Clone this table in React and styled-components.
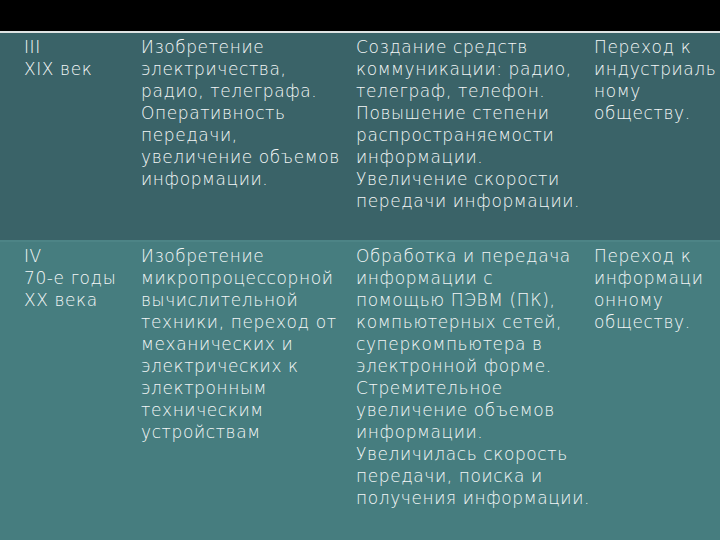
import React from "react";
import styled, { createGlobalStyle } from "styled-components";

const Global = createGlobalStyle`
  html, body {
    margin: 0;
    padding: 0;
    background: #000;
  }
  body {
    width: 720px;
    height: 540px;
    overflow: hidden;
  }
`;

const Page = styled.div`
  width: 720px;
  height: 540px;
  display: flex;
  flex-direction: column;
  background: #000;
  overflow: hidden;
`;

const TopBar = styled.div`
  height: 31px;
  flex: none;
  background: #000;
  border-bottom: 2px solid #dfe3e3;
`;

const Row = styled.div`
  display: grid;
  grid-template-columns: 117px 215px 238px 1fr;
  padding: 3px 0 0 24px;
  height: ${({ $h }) => ($h ? `${$h}px` : "auto")};
  flex: ${({ $h }) => ($h ? "none" : "1")};
  box-sizing: border-box;
  background: ${({ $bg }) => $bg};
  border-bottom: ${({ $line }) => ($line ? `2px solid ${$line}` : "none")};
`;

const Cell = styled.div`
  font-family: "DejaVu Sans", "Liberation Sans", sans-serif;
  font-weight: 200;
  font-size: 17px;
  line-height: 22px;
  color: #f4f7f7;
  white-space: pre;
  letter-spacing: 0.6px;
`;

const rows = [
  {
    bg: "#3a6368",
    h: 209,
    line: "#4d8486",
    cells: [
      "III\nXIX век",
      "Изобретение\nэлектричества,\nрадио, телеграфа.\nОперативность\nпередачи,\nувеличение объемов\nинформации.",
      "Создание средств\nкоммуникации: радио,\nтелеграф, телефон.\nПовышение степени\nраспространяемости\nинформации.\nУвеличение скорости\nпередачи информации.",
      "Переход к\nиндустриаль\nному\nобществу.",
    ],
  },
  {
    bg: "#467d7f",
    cells: [
      "IV\n70-е годы\nXX века",
      "Изобретение\nмикропроцессорной\nвычислительной\nтехники, переход от\nмеханических и\nэлектрических к\nэлектронным\nтехническим\nустройствам",
      "Обработка и передача\nинформации с\nпомощью ПЭВМ (ПК),\nкомпьютерных сетей,\nсуперкомпьютера в\nэлектронной форме.\nСтремительное\nувеличение объемов\nинформации.\nУвеличилась скорость\nпередачи, поиска и\nполучения информации.",
      "Переход к\nинформаци\nонному\nобществу.",
    ],
  },
];

export default function App() {
  return (
    <Page>
      <Global />
      <TopBar />
      {rows.map((r, i) => (
        <Row key={i} $bg={r.bg} $h={r.h} $line={r.line}>
          {r.cells.map((c, j) => (
            <Cell key={j}>{c}</Cell>
          ))}
        </Row>
      ))}
    </Page>
  );
}
